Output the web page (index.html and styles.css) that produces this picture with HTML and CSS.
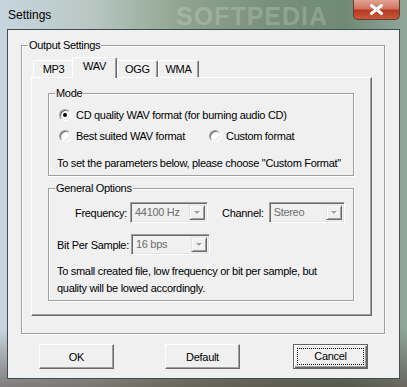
FILE: index.html
```html
<!DOCTYPE html>
<html lang="en">
<head>
    <meta charset="UTF-8">
    <title>Settings</title>
    <link rel="stylesheet" href="styles.css">
</head>
<body>
<div class="window">
    <div class="titlebar">
        <span class="title">Settings</span>
        <span class="watermark">SOFTPEDIA</span>
        <button class="close">
            <svg width="13" height="11" viewBox="0 0 13 11"><path d="M1.5 1.5 L11.5 9.5 M11.5 1.5 L1.5 9.5" stroke="#fff" stroke-width="3" stroke-linecap="square"/></svg>
        </button>
    </div>

    <div class="client">
        <!-- Output settings group -->
        <div class="group output-group">
            <span class="group-label">Output Settings</span>
            <div class="tabs">
                <div class="tab tab-mp3">MP3</div>
                <div class="tab tab-wav selected">WAV</div>
                <div class="tab tab-ogg">OGG</div>
                <div class="tab tab-wma">WMA</div>
            </div>
            <div class="tab-panel">
                <div class="group mode-group">
                    <span class="group-label">Mode</span>
                    <div class="radio-row">
                        <label class="radio-item"><span class="radio checked"></span>CD quality WAV format (for burning audio CD)</label>
                    </div>
                    <div class="radio-row">
                        <label class="radio-item best"><span class="radio"></span>Best suited WAV format</label>
                        <label class="radio-item"><span class="radio"></span>Custom format</label>
                    </div>
                    <p class="hint">To set the parameters below, please choose "Custom Format"</p>
                </div>

                <div class="group general-group">
                    <span class="group-label">General Options</span>
                    <div class="field-row">
                        <span class="field-label freq-label">Frequency:</span>
                        <span class="combo freq-combo">44100 Hz<span class="drop"></span></span>
                        <span class="field-label channel-label">Channel:</span>
                        <span class="combo channel-combo">Stereo<span class="drop"></span></span>
                    </div>
                    <div class="field-row bits-row">
                        <span class="field-label bits-label">Bit Per Sample:</span>
                        <span class="combo bits-combo">16 bps<span class="drop"></span></span>
                    </div>
                    <p class="note">To small created file, low frequency or bit per sample, but<br>quality will be lowed accordingly.</p>
                </div>
            </div>
        </div>

        <div class="buttons">
            <button class="btn">OK</button>
            <button class="btn">Default</button>
            <button class="btn default-btn"><span class="focus">Cancel</span></button>
        </div>
    </div>
</div>
</body>
</html>
```

FILE: styles.css
```css
body {
    margin: 0;
    font-family: "Liberation Sans", Arial, sans-serif;
    font-size: 11px;
    letter-spacing: -0.3px;
    color: #000;
}

.window {
    width: 407px;
    height: 387px;
    display: flex;
    flex-direction: column;
    background:
        linear-gradient(to bottom, rgba(0,0,0,0) 85%, rgba(70,50,45,0.55) 100%),
        linear-gradient(to right, #c7d5de 0%, #b9c8c4 22%, #8fa48e 45%, #7a917c 65%, #708a74 85%, #90a79a 100%);
}

.titlebar {
    height: 29px;
    position: relative;
    display: flex;
    justify-content: space-between;
    align-items: flex-start;
}
.title {
    padding: 8px 0 0 8px;
    font-size: 12px;
    line-height: 14px;
    letter-spacing: 0;
}
.watermark {
    position: absolute;
    left: 176px;
    top: 2px;
    font-size: 25px;
    font-weight: bold;
    letter-spacing: 1px;
    color: rgba(235, 240, 235, 0.22);
}
.close {
    width: 47px;
    height: 20px;
    margin-right: 7px;
    padding: 0;
    border: 1px solid #6b3a30;
    border-top: none;
    border-radius: 0 0 5px 5px;
    background: linear-gradient(to bottom, #e3a291 0%, #d27460 45%, #b63a1f 55%, #c85a3c 100%);
    display: flex;
    justify-content: center;
    align-items: center;
}

.client {
    margin: 0 7px 8px 7px;
    height: 350px;
    box-sizing: border-box;
    border: 1px solid #3d4b52;
    background: #f0f0f0;
}

/* etched group box */
.group {
    position: relative;
    box-sizing: border-box;
    border: 1px solid #a0a0a0;
    box-shadow: inset 1px 1px #fff, 1px 1px #fff;
}
.group-label {
    position: absolute;
    top: -8px;
    left: 6px;
    padding: 0 1px;
    background: #f0f0f0;
    line-height: 14px;
}

.output-group {
    margin: 15px 0 0 13px;
    width: 364px;
    height: 289px;
    padding: 11px 0 0 9px;
}

.tabs {
    display: flex;
    align-items: flex-end;
    height: 20px;
    padding-left: 2px;
    position: relative;
    z-index: 1;
}
.tab {
    box-sizing: border-box;
    height: 17px;
    border-left: 1px solid #fff;
    border-top: 1px solid #fff;
    border-right: 1px solid #696969;
    box-shadow: inset -1px 0 #a0a0a0;
    border-radius: 2px 2px 0 0;
    background: #f0f0f0;
    text-align: center;
    line-height: 15px;
    padding-top: 1px;
}
.tab-mp3 { width: 41px; }
.tab-wav { width: 45px; }
.tab-ogg { width: 41px; }
.tab-wma { width: 41px; }
.tab.selected {
    height: 21px;
    margin: 0 -1px -1px -2px;
    padding-top: 0;
    line-height: 17px;
}
.tab.selected + .tab { margin-left: 1px; }

.tab-panel {
    width: 341px;
    height: 239px;
    box-sizing: border-box;
    border-left: 1px solid #fff;
    border-top: 1px solid #fff;
    border-right: 1px solid #696969;
    border-bottom: 1px solid #696969;
    box-shadow: inset -1px -1px #a0a0a0;
    padding: 15px 0 0 16px;
}

.mode-group {
    width: 306px;
    height: 83px;
    padding: 10px 0 0 10px;
}
.radio-row {
    display: flex;
    height: 21px;
    align-items: center;
}
.radio-item {
    display: flex;
    align-items: center;
    gap: 5px;
}
.radio-item.best { width: 150px; }
.radio {
    width: 12px;
    height: 12px;
    box-sizing: border-box;
    border-radius: 50%;
    border: 1px solid;
    border-color: #a0a0a0 #fff #fff #a0a0a0;
    box-shadow: inset 1px 1px #696969, inset -1px -1px #e3e3e3;
    background: #fff;
    position: relative;
}
.radio.checked::after {
    content: "";
    position: absolute;
    left: 3px;
    top: 3px;
    width: 4px;
    height: 4px;
    border-radius: 50%;
    background: #000;
}
.hint {
    margin: 9px 0 0 -2px;
    line-height: 17px;
    white-space: nowrap;
}

.general-group {
    margin-top: 12px;
    width: 306px;
    height: 113px;
    padding: 13px 0 0 8px;
}
.field-row {
    display: flex;
    align-items: center;
    height: 21px;
}
.field-label { margin-right: 3px; }
.freq-label {
    width: 70px;
    text-align: right;
}
.channel-label { margin-left: 14px; margin-right: 5px; }
.bits-label { margin-right: 2px; }
.bits-row { margin-top: 11px; }

.combo {
    position: relative;
    box-sizing: border-box;
    height: 21px;
    border: 1px solid;
    border-color: #a0a0a0 #fff #fff #a0a0a0;
    box-shadow: inset 1px 1px #696969, inset -1px -1px #e3e3e3;
    padding: 2px 0 0 4px;
    line-height: 15px;
    color: #6d6d6d;
}
.freq-combo { width: 78px; }
.channel-combo { width: 76px; }
.bits-combo { width: 79px; }
.drop {
    position: absolute;
    right: 2px;
    top: 2px;
    width: 16px;
    height: 15px;
    box-sizing: border-box;
    border: 1px solid;
    border-color: #e3e3e3 #696969 #696969 #e3e3e3;
    box-shadow: inset 1px 1px #fff, inset -1px -1px #a0a0a0;
    background: #f0f0f0;
}
.drop::after {
    content: "";
    position: absolute;
    left: 4px;
    top: 5px;
    border-left: 3px solid transparent;
    border-right: 3px solid transparent;
    border-top: 3px solid #a0a0a0;
    filter: drop-shadow(1px 1px 0 #fff);
}

.note {
    margin: 8px 0 0 0;
    line-height: 17px;
}

.buttons {
    display: flex;
    gap: 51px;
    padding: 10px 0 0 31px;
}
.btn {
    width: 75px;
    height: 25px;
    box-sizing: border-box;
    padding: 0;
    font: inherit;
    letter-spacing: inherit;
    color: #000;
    background: #f0f0f0;
    border: 1px solid;
    border-color: #fff #696969 #696969 #fff;
    box-shadow: inset -1px -1px #a0a0a0;
}
.default-btn {
    margin-left: 2px;
    border: 1px solid #646464;
    box-shadow: inset 1px 1px #fff, inset -1px -1px #696969, inset -2px -2px #a0a0a0;
    padding: 3px;
}
.focus {
    display: block;
    height: 100%;
    box-sizing: border-box;
    border: 1px dotted #000;
    line-height: 15px;
}
```
